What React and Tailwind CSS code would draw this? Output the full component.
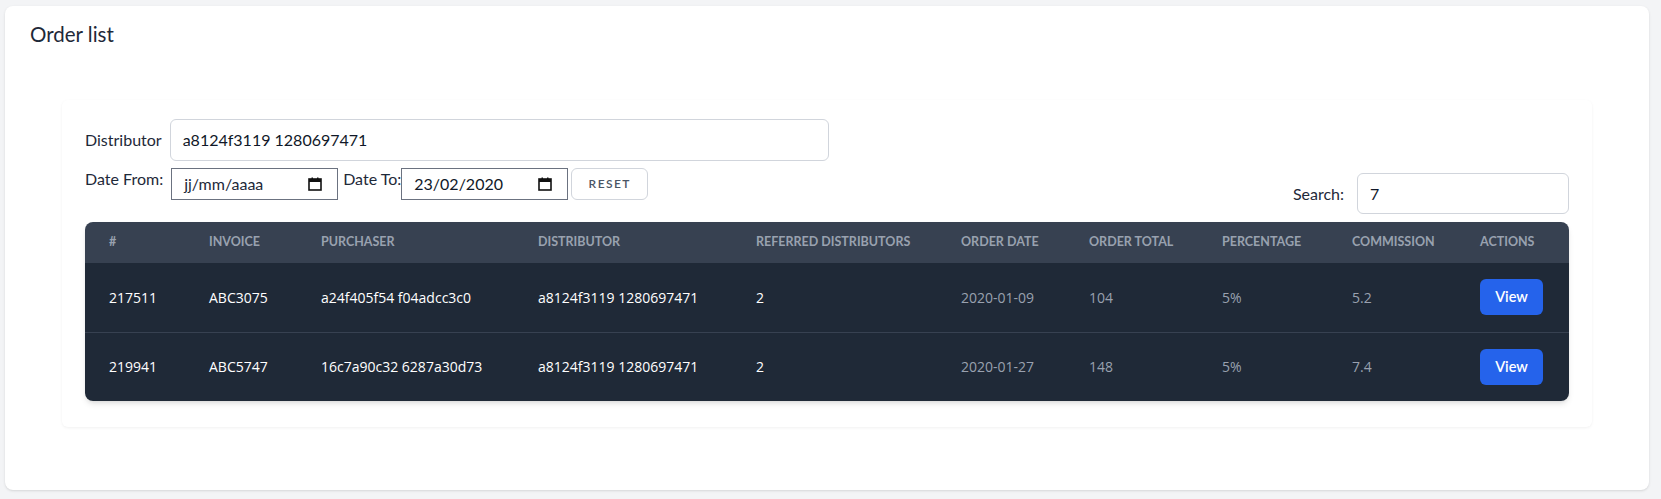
import React from 'react';

const rows = [
  { id: '217511', invoice: 'ABC3075', purchaser: 'a24f405f54 f04adcc3c0', distributor: 'a8124f3119 1280697471', referred: '2', date: '2020-01-09', total: '104', percentage: '5%', commission: '5.2' },
  { id: '219941', invoice: 'ABC5747', purchaser: '16c7a90c32 6287a30d73', distributor: 'a8124f3119 1280697471', referred: '2', date: '2020-01-27', total: '148', percentage: '5%', commission: '7.4' },
];

function CalendarIcon() {
  return (
    <svg width="14" height="14" viewBox="0 0 14 14" className="shrink-0">
      <rect x="1" y="2" width="12" height="11" fill="none" stroke="#111" strokeWidth="1.6" />
      <rect x="1" y="2" width="12" height="3" fill="#111" />
      <rect x="3.5" y="0.5" width="1.5" height="2.5" fill="#111" />
      <rect x="9" y="0.5" width="1.5" height="2.5" fill="#111" />
    </svg>
  );
}

function DateField({ value, placeholder }) {
  return (
    <div className="flex h-[32px] w-[167px] items-center justify-between border border-[#6b7280] bg-white pl-[12px] pr-[15px]">
      <span className={`text-[16px] ${value ? 'text-gray-900' : 'text-gray-800'}`}>{value || placeholder}</span>
      <CalendarIcon />
    </div>
  );
}

export default function App() {
  const headers = [
    ['#', 'w-[100px]'],
    ['Invoice', 'w-[112px]'],
    ['Purchaser', 'w-[217px]'],
    ['Distributor', 'w-[218px]'],
    ['Referred Distributors', 'w-[205px]'],
    ['Order Date', 'w-[128px]'],
    ['Order Total', 'w-[133px]'],
    ['Percentage', 'w-[130px]'],
    ['Commission', 'w-[128px]'],
    ['Actions', ''],
  ];

  return (
    <div className="min-h-[499px] bg-[#f3f4f6] pl-[5px] pr-[12px] pt-[6px] pb-[10px] font-['Lato',sans-serif]">
      <div className="rounded-lg bg-white pb-[63px] shadow">
        <h2 className="px-[25px] pt-[14px] text-[20.5px] leading-[28px] text-gray-800">Order list</h2>

        <div className="mx-[57px] mt-[52px] rounded-md bg-white px-[23px] pt-[19px] pb-[26px] shadow-[0_1px_3px_rgba(0,0,0,0.06)]">
          <div className="flex items-center gap-[8px]">
            <label className="text-[16px] text-gray-800">Distributor</label>
            <div className="flex h-[42px] w-[659px] items-center rounded-md border border-gray-300 px-[12px] text-[16px] text-gray-900">
              a8124f3119 1280697471
            </div>
          </div>

          <div className="mt-[7px] flex items-start justify-between">
            <div className="flex items-start">
              <span className="mr-[8px] text-[16px] leading-[22px] text-gray-800">Date From:</span>
              <DateField placeholder="jj/mm/aaaa" />
              <span className="ml-[5px] text-[16px] leading-[22px] text-gray-800">Date To:</span>
              <DateField value="23/02/2020" />
              <button className="ml-[3px] h-[32px] w-[77px] rounded-md border border-gray-300 text-[12px] font-semibold tracking-[0.12em] text-gray-600">
                RESET
              </button>
            </div>
            <div className="mt-[5px] flex items-center gap-[13px]">
              <span className="text-[16px] text-gray-800">Search:</span>
              <div className="flex h-[41px] w-[212px] items-center rounded-md border border-gray-300 px-[12px] text-[16px] text-gray-900">
                7
              </div>
            </div>
          </div>

          <div className="mt-[8px] overflow-hidden rounded-lg shadow-md">
            <table className="w-full table-fixed border-collapse">
              <thead className="bg-[#374151]">
                <tr>
                  {headers.map(([h, w]) => (
                    <th key={h} className={`${w} h-[41px] px-[24px] text-left text-[12.5px] font-bold uppercase text-gray-400`}>
                      {h}
                    </th>
                  ))}
                </tr>
              </thead>
              <tbody className="bg-[#1f2937] font-['Open_Sans',sans-serif] text-[14px]">
                {rows.map((r, i) => (
                  <tr key={r.id} className={i > 0 ? 'border-t border-[#374151]' : ''}>
                    <td className="h-[69px] px-[24px] font-medium text-white">{r.id}</td>
                    <td className="px-[24px] font-medium text-white">{r.invoice}</td>
                    <td className="px-[24px] font-medium text-white">{r.purchaser}</td>
                    <td className="px-[24px] font-medium text-white">{r.distributor}</td>
                    <td className="px-[24px] font-medium text-white">{r.referred}</td>
                    <td className="px-[24px] text-gray-400">{r.date}</td>
                    <td className="px-[24px] text-gray-400">{r.total}</td>
                    <td className="px-[24px] text-gray-400">{r.percentage}</td>
                    <td className="px-[24px] text-gray-400">{r.commission}</td>
                    <td className="pl-[24px]">
                      <button className="h-[36px] w-[63px] rounded-md bg-[#2563eb] font-['Lato',sans-serif] text-[14.5px] font-semibold text-white">
                        View
                      </button>
                    </td>
                  </tr>
                ))}
              </tbody>
            </table>
          </div>
        </div>
      </div>
    </div>
  );
}
